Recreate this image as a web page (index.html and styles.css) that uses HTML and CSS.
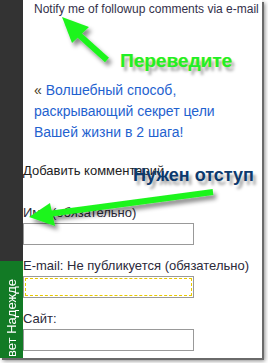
FILE: index.html
```html
<!DOCTYPE html>
<html lang="ru">
<head>
<meta charset="utf-8">
<title>Комментарии</title>
<link rel="stylesheet" href="styles.css">
</head>
<body>
<div class="frame">
  <aside class="sidebar">
    <div class="tab"><span class="tab-text">вет Надежде</span></div>
  </aside>
  <main class="content">
    <p class="notify">Notify me of followup comments via e-mail</p>
    <p class="nav">« <a href="#" class="nav-link">Волшебный способ, раскрывающий секрет цели Вашей жизни в 2 шага!</a></p>
    <h3 class="reply-title">Добавить комментарий</h3>
    <form class="comment-form">
      <label class="field-label">Имя (обязательно)</label>
      <input class="field-input" type="text">
      <label class="field-label">E-mail: Не публикуется (обязательно)</label>
      <input class="field-input is-focused" type="text">
      <label class="field-label">Сайт:</label>
      <input class="field-input" type="text">
    </form>
  </main>
  <svg class="arrows" width="262" height="358" viewBox="0 0 262 358">
    <defs>
      <filter id="sh" x="-20%" y="-20%" width="140%" height="140%">
        <feDropShadow dx="3" dy="4" stdDeviation="2" flood-color="#000" flood-opacity="0.45"/>
      </filter>
    </defs>
    <g filter="url(#sh)" fill="#1ef51e" stroke="#1ef51e">
      <line x1="78" y1="34" x2="107" y2="60" stroke-width="6"/>
      <polygon points="62,17 89,27 72,43" stroke="none"/>
      <line x1="213" y1="192" x2="48" y2="214" stroke-width="6"/>
      <polygon points="29,217 50,203 55,226" stroke="none"/>
    </g>
  </svg>
  <div class="note note-translate">Переведите</div>
  <div class="note note-indent">Нужен отступ</div>
</div>
</body>
</html>
```

FILE: styles.css
```css
html, body {
  margin: 0;
  padding: 0;
  background: #fff;
}

body {
  width: 268px;
  height: 363px;
  overflow: hidden;
  font-family: "Liberation Sans", Arial, sans-serif;
}

.frame {
  position: relative;
  width: 262px;
  height: 358px;
  display: flex;
  overflow: hidden;
  box-shadow: 2px 2px 0 #6a6a6a, 3px 3px 4px rgba(0, 0, 0, 0.45);
}

.sidebar {
  width: 23px;
  flex: none;
  background: #333333;
  display: flex;
  flex-direction: column;
}

.tab {
  margin-top: auto;
  height: 97px;
  background: #127a25;
  overflow: hidden;
  display: flex;
  align-items: flex-end;
}

.tab-text {
  writing-mode: vertical-rl;
  transform: rotate(180deg);
  color: #fff;
  font-size: 13px;
  line-height: 23px;
  width: 23px;
  white-space: nowrap;
  padding-top: 1px;
}

.content {
  flex: 1;
  background: #fff;
  padding: 0 4px 0 0;
  color: #333;
}

.notify {
  margin: 0;
  padding: 2px 0 0 11px;
  font-size: 12px;
  line-height: 14px;
  white-space: nowrap;
  color: #33304a;
}

.nav {
  margin: 64px 0 0;
  padding-left: 11px;
  font-size: 14px;
  line-height: 21px;
  color: #4a3a20;
}

.nav-link {
  color: #1f62cf;
  text-decoration: none;
}

.reply-title {
  margin: 20px 0 0;
  font-size: 13px;
  line-height: 16px;
  font-weight: normal;
  color: #222;
  white-space: nowrap;
}

.comment-form {
  margin-top: 26px;
  display: flex;
  flex-direction: column;
  align-items: flex-start;
}

.field-label {
  font-size: 13px;
  line-height: 16px;
  color: #2c2a3a;
  white-space: nowrap;
}

.field-input {
  width: 171px;
  height: 22px;
  box-sizing: border-box;
  margin: 2px 0 13px;
  padding: 0;
  border: 1px solid #999;
  background: #fff;
}

.field-input.is-focused {
  outline: 1px dashed #e8c800;
  outline-offset: -3px;
}

.arrows {
  position: absolute;
  left: 0;
  top: 0;
  pointer-events: none;
}

.note {
  position: absolute;
  font-weight: bold;
  white-space: nowrap;
}

.note-translate {
  left: 120px;
  top: 51px;
  font-size: 19px;
  line-height: 20px;
  color: #1ef028;
  text-shadow: 1px 0 0 rgba(230, 230, 0, 0.5), 3px 4px 3px rgba(0, 0, 0, 0.35);
}

.note-indent {
  left: 133px;
  top: 165px;
  font-size: 18px;
  line-height: 20px;
  color: #0c3a6e;
  text-shadow: 3px 4px 3px rgba(0, 0, 0, 0.35);
}
```
